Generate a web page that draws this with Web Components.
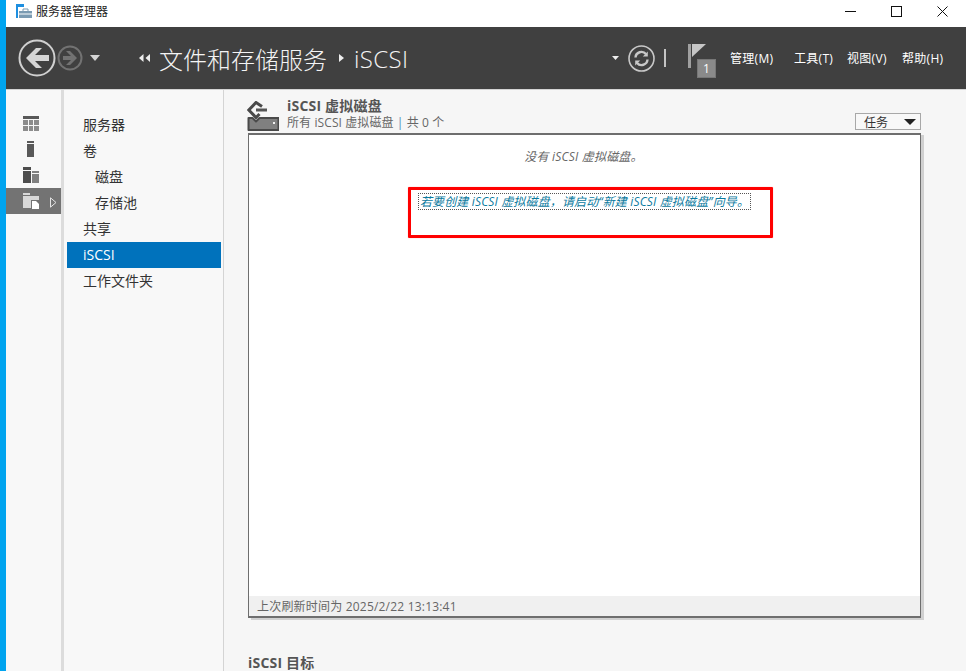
<!DOCTYPE html>
<html lang="zh">
<head>
<meta charset="utf-8">
<title>服务器管理器</title>
<style>
    html, body { margin: 0; height: 100%; overflow: hidden; }
    body {
        font-family: "Open Sans", "Noto Sans CJK SC", sans-serif;
        background: #f6f6f6;
        color: #333;
    }
</style>
</head>
<body>
<sm-window>
    <sm-titlebar slot="title">服务器管理器</sm-titlebar>
    <sm-header slot="header"></sm-header>
    <sm-rail slot="rail"></sm-rail>
    <sm-nav slot="nav">
        <sm-nav-item>服务器</sm-nav-item>
        <sm-nav-item>卷</sm-nav-item>
        <sm-nav-item sub>磁盘</sm-nav-item>
        <sm-nav-item sub>存储池</sm-nav-item>
        <sm-nav-item>共享</sm-nav-item>
        <sm-nav-item selected>iSCSI</sm-nav-item>
        <sm-nav-item>工作文件夹</sm-nav-item>
    </sm-nav>
    <sm-content slot="content"></sm-content>
</sm-window>

<script>
const FONT = '"Open Sans", "Noto Sans CJK SC", sans-serif';

class SmWindow extends HTMLElement {
    constructor() {
        super();
        this.attachShadow({ mode: 'open' });
        this.shadowRoot.innerHTML = `
<style>
    :host {
        display: block;
        height: 671px;
        width: 966px;
        overflow: hidden;
        border-left: 6px solid #00a4ef;
        box-sizing: border-box;
    }
    .frame { display: flex; flex-direction: column; height: 100%; }
    .body { display: flex; flex: 1; min-height: 0; }
</style>
<div class="frame">
    <slot name="title"></slot>
    <slot name="header"></slot>
    <div class="body">
        <slot name="rail"></slot>
        <slot name="nav"></slot>
        <slot name="content"></slot>
    </div>
</div>`;
    }
}

class SmTitlebar extends HTMLElement {
    constructor() {
        super();
        this.attachShadow({ mode: 'open' });
        this.shadowRoot.innerHTML = `
<style>
    :host {
        display: flex;
        align-items: center;
        height: 27px;
        background: #fff;
        color: #222;
        font: 12px ${FONT};
        padding-left: 10px;
    }
    .app { margin-right: 4px; position: relative; top: -2px; }
    .name { flex: 1; position: relative; top: -3px; }
    .ctl { display: flex; margin-right: 18px; gap: 35px; align-items: center; position: relative; top: -2px; }
</style>
<svg class="app" width="16" height="15" viewBox="0 0 16 15">
    <rect x="0" y="0" width="8" height="3" fill="#1e8fe0"/>
    <rect x="0" y="3" width="2" height="11" fill="#1e8fe0"/>
    <path d="M3 7h13v7H3z" fill="#7b9bb2"/>
    <path d="M7 7V5h5v2" fill="none" stroke="#7b9bb2" stroke-width="1"/>
    <path d="M3 10h13" stroke="#fff" stroke-width="1"/>
</svg>
<span class="name"><slot></slot></span>
<div class="ctl">
    <svg width="11" height="11" viewBox="0 0 11 11"><path d="M0 5.500h11" stroke="#111"/></svg>
    <svg width="11" height="11" viewBox="0 0 11 11"><rect x=".5" y=".5" width="10" height="10" fill="none" stroke="#111"/></svg>
    <svg width="11" height="11" viewBox="0 0 11 11"><path d="M.5.5l10 10M10.500.5l-10 10" stroke="#111"/></svg>
</div>`;
    }
}

class SmHeader extends HTMLElement {
    constructor() {
        super();
        this.attachShadow({ mode: 'open' });
        this.shadowRoot.innerHTML = `
<style>
    :host {
        display: flex;
        align-items: center;
        height: 62px;
        background: #404040;
        border-bottom: 1px solid #d4d4d4;
        color: #fff;
        font: 12px ${FONT};
    }
    svg { display: block; flex: none; }
    .nav { display: flex; align-items: center; margin-left: 12px; gap: 1px; }
    .crumbs { display: flex; align-items: center; flex: 1; font-size: 24px; font-weight: 300; margin-left: 39px; color: #f4f4f4; }
    .crumbs .first { margin-left: 9px; }
    .crumbs .last { letter-spacing: .4px; }
    .tools { display: flex; align-items: center; }
    .flag { margin: 0 0 0 22px; position: relative; width: 27px; height: 34px; }
    .badge {
        position: absolute; left: 9px; top: 18px; width: 19px; height: 19px;
        background: #8a8a8a; border: 1px solid #777; box-sizing: border-box;
        text-align: center; font: 12px/17px ${FONT};
    }
    .bar { width: 2px; height: 18px; background: #c4c4c4; margin-left: 9px; }
    .menu { display: flex; margin: 0 22px 0 15px; letter-spacing: .3px; }
    .menu span { display: block; white-space: nowrap; }
</style>
<div class="nav">
    <svg width="38" height="38" viewBox="0 0 38 38">
        <circle cx="19" cy="19" r="17.500" fill="none" stroke="#d0d0d0" stroke-width="2"/>
        <path d="M8 19l10-10h6l-7 7h14v6H17l7 7h-6z" fill="#d6d6d6"/>
    </svg>
    <svg width="26" height="26" viewBox="0 0 26 26">
        <circle cx="13" cy="13" r="11.500" fill="none" stroke="#727272" stroke-width="2"/>
        <path d="M20 13l-7-7h-4l5 5H6v4h8l-5 5h4z" fill="#727272"/>
    </svg>
    <svg width="10" height="6" viewBox="0 0 10 6" style="margin-left:6px"><path d="M0 0h10L5 6z" fill="#d4d4d4"/></svg>
</div>
<div class="crumbs">
    <svg width="11" height="8" viewBox="0 0 11 8"><path d="M4.500 0v8L0 4zM11 0v8L6.500 4z" fill="#eee"/></svg>
    <span class="first">文件和存储服务</span>
    <svg width="5" height="8" viewBox="0 0 5 8" style="margin:0 10px 0 12px"><path d="M0 0l5 4-5 4z" fill="#eee"/></svg>
    <span class="last">iSCSI</span>
</div>
<div class="tools">
    <svg width="7" height="4" viewBox="0 0 7 4" style="margin-right:9px"><path d="M0 0h7L3.500 4z" fill="#eee"/></svg>
    <svg width="27" height="27" viewBox="0 0 27 27">
        <circle cx="13.500" cy="13.500" r="12.500" fill="none" stroke="#c8c8c8" stroke-width="1.600"/>
        <path d="M7.500 12.500a6 6 0 0 1 10.500-3.500M19.500 14.500a6 6 0 0 1-10.500 3.500" fill="none" stroke="#c8c8c8" stroke-width="2.400"/>
        <path d="M19.800 6.500v5h-5zM7.200 20.500v-5h5z" fill="#c8c8c8"/>
    </svg>
    <span class="bar"></span>
    <div class="flag">
        <svg width="18" height="24" viewBox="0 0 18 24" style="position:absolute;left:0;top:3px">
            <path d="M0 0h3v24H0z" fill="#a0a0a0"/>
            <path d="M4 0h14L4 13z" fill="#c6c6c6"/>
        </svg>
        <span class="badge">1</span>
    </div>
    <div class="menu">
        <span style="width:64px">管理(M)</span>
        <span style="width:53px">工具(T)</span>
        <span style="width:55px">视图(V)</span>
        <span style="width:42px">帮助(H)</span>
    </div>
</div>`;
    }
}

class SmRail extends HTMLElement {
    constructor() {
        super();
        this.attachShadow({ mode: 'open' });
        this.shadowRoot.innerHTML = `
<style>
    :host {
        display: block;
        flex: none;
        width: 55px;
        background: #f8f8f8;
        border-right: 3px solid #dcdcdc;
        padding-top: 20px;
    }
    .row { display: flex; align-items: center; height: 26px; padding-left: 17px; position: relative; box-sizing: border-box; }
    .row.on { background: #737373; }
    svg { display: block; }
    .arrow { position: absolute; left: 44px; top: 9px; }
</style>
<div class="row">
    <svg width="16" height="15" viewBox="0 0 16 15">
        <rect width="16" height="3" fill="#595959"/>
        <path d="M0 4h5v5H0zM6 4h4v5H6zM11 4h5v5h-5zM0 10h5v5H0zM6 10h4v5H6zM11 10h5v5h-5z" fill="#8c8c8c"/>
    </svg>
</div>
<div class="row">
    <svg width="16" height="16" viewBox="0 0 16 16">
        <rect x="4" width="7" height="2" fill="#595959"/>
        <rect x="4" y="3" width="7" height="13" fill="#595959"/>
    </svg>
</div>
<div class="row">
    <svg width="16" height="16" viewBox="0 0 16 16">
        <rect width="8" height="3" fill="#4d4d4d"/>
        <rect y="4" width="8" height="12" fill="#4d4d4d"/>
        <rect x="9" y="4" width="7" height="2" fill="#808080"/>
        <rect x="9" y="7" width="7" height="9" fill="#808080"/>
    </svg>
</div>
<div class="row on">
    <svg width="16" height="16" viewBox="0 0 16 16">
        <path d="M0 0h7v2H0zM0 3h16v4H8v8H0z" fill="#d8d8d8"/>
        <path d="M9 8h4l3 3v5H9z" fill="#fff"/>
    </svg>
    <svg class="arrow" width="7" height="11" viewBox="0 0 7 11"><path d="M.5.8v9.400L6 5.500z" fill="none" stroke="#e4e4e4"/></svg>
</div>`;
    }
}

class SmNav extends HTMLElement {
    constructor() {
        super();
        this.attachShadow({ mode: 'open' });
        this.shadowRoot.innerHTML = `
<style>
    :host {
        display: block;
        flex: none;
        width: 154px;
        padding: 22px 2px 0 3px;
        background: #f8f8f8;
        border-right: 1px solid #d4d4d4;
    }
</style>
<slot></slot>`;
    }
}

class SmNavItem extends HTMLElement {
    constructor() {
        super();
        this.attachShadow({ mode: 'open' });
        this.shadowRoot.innerHTML = `
<style>
    :host {
        display: block;
        height: 26px;
        padding-left: 16px;
        font: 14px/26px ${FONT};
        color: #333;
        white-space: nowrap;
    }
    :host([sub]) { padding-left: 28px; }
    :host([selected]) { background: #0072bc; color: #fff; }
</style>
<slot></slot>`;
    }
}

class SmContent extends HTMLElement {
    constructor() {
        super();
        this.attachShadow({ mode: 'open' });
        this.shadowRoot.innerHTML = `
<style>
    :host {
        display: block;
        flex: 1;
        min-width: 0;
        padding: 9px 0 0 24px;
        background: #f6f6f6;
        font: 12px ${FONT};
        color: #666;
        overflow: hidden;
    }
    .head { display: flex; height: 34px; padding-right: 45px; align-items: flex-end; }
    .icon { flex: none; margin: 0 8px 2px -1px; }
    .titles { flex: 1; align-self: flex-start; margin-top: -1px; }
    .title { font-weight: 700; font-size: 14px; line-height: 16px; color: #555; letter-spacing: .2px; }
    .sub { line-height: 16px; letter-spacing: .1px; margin-top: 1px; }
    .sub i { font-style: normal; color: #4a88b8; }
    .tasks {
        display: flex; align-items: center; justify-content: space-between; box-sizing: border-box;
        width: 66px; height: 17px; padding: 0 4px 0 8px; margin-bottom: 3px;
        border: 1px solid #a8a8a8; color: #333; background: #f8f8f8;
    }
    .panel {
        position: relative;
        box-sizing: border-box;
        width: 673px;
        height: 485px;
        background: #fff;
        border: 1px solid #6e6e6e;
        border-top-width: 2px;
        border-bottom-width: 2px;
        box-shadow: 3px 2px 0 #d0d0d0;
        display: flex;
        flex-direction: column;
    }
    .msg { flex: 1; display: flex; flex-direction: column; align-items: center; font-style: italic; padding-top: 14px; }
    .empty { line-height: 16px; color: #666; letter-spacing: .2px; position: relative; left: -1px; }
    .link {
        margin-top: 29px; color: #0c7a9e; line-height: 15px; padding: 0 1px;
        outline: 1px dotted #555; white-space: nowrap; letter-spacing: .15px;
    }
    .foot { height: 20px; line-height: 22px; padding-left: 8px; background: #f0f0f0; color: #666; letter-spacing: .2px; }
    .mark {
        position: absolute; left: 159px; top: 52px; width: 365px; height: 51px;
        box-sizing: border-box; border: 3px solid #f00; border-radius: 1px;
        box-shadow: 0 0 1px rgba(255, 0, 0, .5);
    }
    .next { margin-top: 37px; font-weight: 700; font-size: 14px; color: #555; line-height: 16px; letter-spacing: .2px; }
</style>
<div class="head">
    <svg class="icon" width="32" height="30" viewBox="0 0 32 30">
        <path d="M1.500 17h4l3.500 3.500 3.500-3.500h19v12h-30z" fill="#808080" stroke="#4a4a4a" stroke-width="2" stroke-linejoin="round"/>
        <rect x="26" y="21" width="2" height="2" fill="#f0f0f0"/>
        <path d="M15 5.500L9 1.500 1.800 9 9 16.500l3.500-3.500" fill="none" stroke="#4a4a4a" stroke-width="3"/>
        <path d="M9 9h11" stroke="#555" stroke-width="3"/>
    </svg>
    <div class="titles">
        <div class="title">iSCSI 虚拟磁盘</div>
        <div class="sub">所有 iSCSI 虚拟磁盘 <i>|</i> 共 0 个</div>
    </div>
    <div class="tasks">任务<svg width="12" height="6" viewBox="0 0 12 6"><path d="M0 0h12L6 6z" fill="#222"/></svg></div>
</div>
<div class="panel">
    <div class="msg">
        <div class="empty">没有 iSCSI 虚拟磁盘。</div>
        <div class="link">若要创建 iSCSI 虚拟磁盘，请启动“新建 iSCSI 虚拟磁盘”向导。</div>
    </div>
    <div class="foot">上次刷新时间为 2025/2/22 13:13:41</div>
    <div class="mark"></div>
</div>
<div class="next">iSCSI 目标</div>`;
    }
}

customElements.define('sm-window', SmWindow);
customElements.define('sm-titlebar', SmTitlebar);
customElements.define('sm-header', SmHeader);
customElements.define('sm-rail', SmRail);
customElements.define('sm-nav', SmNav);
customElements.define('sm-nav-item', SmNavItem);
customElements.define('sm-content', SmContent);
</script>
</body>
</html>
